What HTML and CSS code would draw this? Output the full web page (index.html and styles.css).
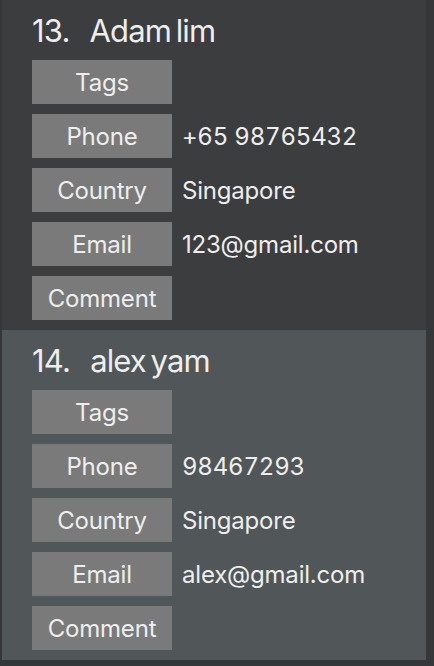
FILE: index.html
```html
<!DOCTYPE html>
<html>
<head>
<meta charset="utf-8">
<link rel="stylesheet" href="styles.css">
</head>
<body>
<div class="list">
  <div class="card card-odd">
    <div class="title"><span class="idx">13.</span><span class="name">Adam lim</span></div>
    <div class="row"><span class="label">Tags</span></div>
    <div class="row"><span class="label">Phone</span><span class="value num">+65 98765432</span></div>
    <div class="row"><span class="label">Country</span><span class="value">Singapore</span></div>
    <div class="row"><span class="label">Email</span><span class="value">123@gmail.com</span></div>
    <div class="row"><span class="label">Comment</span></div>
  </div>
  <div class="card card-even">
    <div class="title"><span class="idx">14.</span><span class="name">alex yam</span></div>
    <div class="row"><span class="label">Tags</span></div>
    <div class="row"><span class="label">Phone</span><span class="value num">98467293</span></div>
    <div class="row"><span class="label">Country</span><span class="value">Singapore</span></div>
    <div class="row"><span class="label">Email</span><span class="value">alex@gmail.com</span></div>
    <div class="row"><span class="label">Comment</span></div>
  </div>
</div>
</body>
</html>
```
FILE: styles.css
```css
html, body {
  margin: 0;
  padding: 0;
  background: #363738;
  height: 100%;
  overflow: hidden;
}
body {
  font-family: Inter, "Liberation Sans", sans-serif;
  color: #eeeeee;
}
.list {
  display: flex;
  flex-direction: column;
  padding-left: 2px;
  width: 424px;
}
.card {
  height: 330px;
  box-sizing: border-box;
  padding: 0 0 0 30px;
  display: flex;
  flex-direction: column;
  gap: 10px;
}
.card-odd { background: #3c3d3f; }
.card-even { background: #515658; }
.title {
  height: 50px;
  box-sizing: border-box;
  padding-top: 12px;
  display: flex;
  align-items: flex-start;
  gap: 20px;
  font-size: 31px;
  line-height: normal;
}
.idx {
  letter-spacing: -0.8px;
}
.name {
  letter-spacing: -0.9px;
  word-spacing: -3px;
}
.row {
  display: flex;
  align-items: center;
  height: 44px;
  gap: 10px;
}
.label {
  width: 140px;
  height: 44px;
  background: #7a7a7a;
  display: flex;
  align-items: center;
  justify-content: center;
  font-size: 24px;
  letter-spacing: -0.2px;
}
.value {
  font-size: 24px;
  letter-spacing: -0.2px;
}
.num {
  font-variant-numeric: tabular-nums;
}
```
